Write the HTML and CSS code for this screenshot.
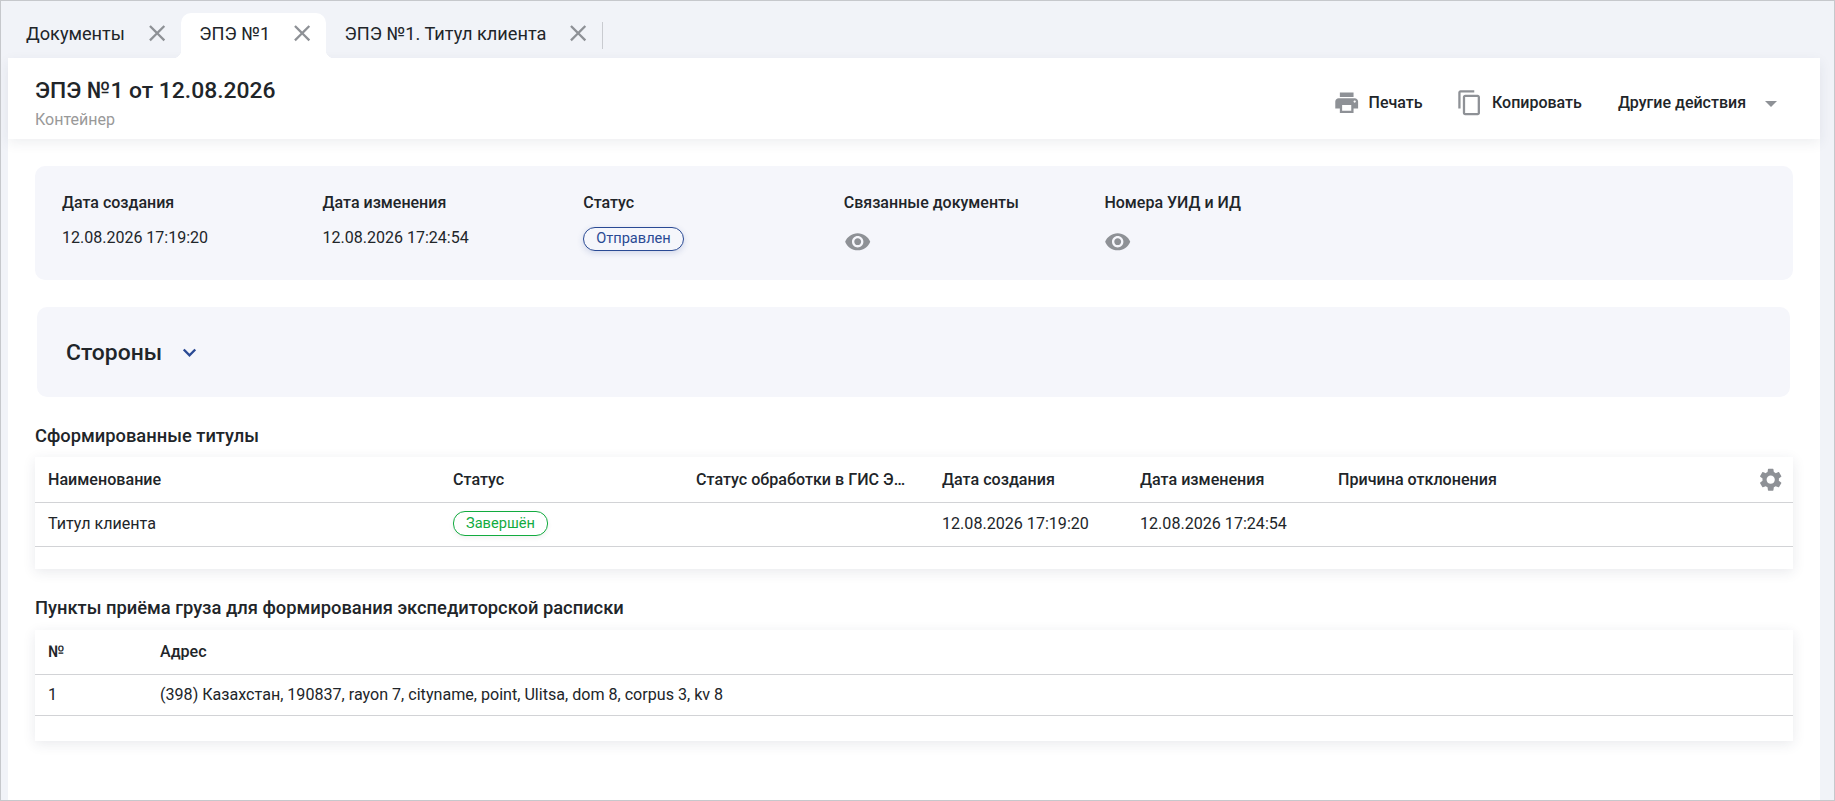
FILE: index.html
```html
<!DOCTYPE html>
<html>
<head>
  <title>ЭПЭ №1</title>
  <link rel="stylesheet" href="styles.css">
</head>
<body>
  <div class="tabs">
    <div class="tab">
      <span>Документы</span>
      <svg class="tab-close" viewBox="4 4 16 16"><path d="M19 6.41L17.59 5 12 10.59 6.41 5 5 6.41 10.59 12 5 17.59 6.41 19 12 13.41 17.59 19 19 17.59 13.41 12z"/></svg>
    </div>
    <div class="tab active">
      <span>ЭПЭ №1</span>
      <svg class="tab-close" viewBox="4 4 16 16"><path d="M19 6.41L17.59 5 12 10.59 6.41 5 5 6.41 10.59 12 5 17.59 6.41 19 12 13.41 17.59 19 19 17.59 13.41 12z"/></svg>
    </div>
    <div class="tab last">
      <span>ЭПЭ №1. Титул клиента</span>
      <svg class="tab-close" viewBox="4 4 16 16"><path d="M19 6.41L17.59 5 12 10.59 6.41 5 5 6.41 10.59 12 5 17.59 6.41 19 12 13.41 17.59 19 19 17.59 13.41 12z"/></svg>
    </div>
  </div>

  <div class="page">
    <div class="header">
      <div>
        <div class="title">ЭПЭ №1 от 12.08.2026</div>
        <div class="subtitle">Контейнер</div>
      </div>
      <div class="actions">
        <div class="action print">
          <svg class="icon" viewBox="0 0 24 24"><path d="M19 8H5c-1.66 0-3 1.34-3 3v6h4v4h12v-4h4v-6c0-1.66-1.34-3-3-3zm-3 11H8v-5h8v5zm3-7c-.55 0-1-.45-1-1s.45-1 1-1 1 .45 1 1-.45 1-1 1zm-1-9H6v4h12V3z"/></svg>
          Печать
        </div>
        <div class="action copy">
          <svg class="icon" viewBox="0 0 24 24"><path d="M16 1H4c-1.1 0-2 .9-2 2v14h2V3h12V1zm3 4H8c-1.1 0-2 .9-2 2v14c0 1.1.9 2 2 2h11c1.1 0 2-.9 2-2V7c0-1.1-.9-2-2-2zm0 16H8V7h11v14z"/></svg>
          Копировать
        </div>
        <div class="action more">
          Другие действия
          <span class="caret"></span>
        </div>
      </div>
    </div>

    <div class="main">
      <div class="info">
        <div class="info-col">
          <div class="info-label">Дата создания</div>
          <div class="info-value">12.08.2026 17:19:20</div>
        </div>
        <div class="info-col">
          <div class="info-label">Дата изменения</div>
          <div class="info-value">12.08.2026 17:24:54</div>
        </div>
        <div class="info-col">
          <div class="info-label">Статус</div>
          <span class="chip blue">Отправлен</span>
        </div>
        <div class="info-col">
          <div class="info-label">Связанные документы</div>
          <svg class="icon eye" viewBox="0 0 24 24"><path d="M12 4.5C7 4.5 2.73 7.61 1 12c1.73 4.39 6 7.5 11 7.5s9.27-3.11 11-7.5c-1.73-4.39-6-7.5-11-7.5zM12 17c-2.76 0-5-2.24-5-5s2.24-5 5-5 5 2.24 5 5-2.24 5-5 5zm0-8c-1.66 0-3 1.34-3 3s1.34 3 3 3 3-1.34 3-3-1.34-3-3-3z"/></svg>
        </div>
        <div class="info-col">
          <div class="info-label">Номера УИД и ИД</div>
          <svg class="icon eye" viewBox="0 0 24 24"><path d="M12 4.5C7 4.5 2.73 7.61 1 12c1.73 4.39 6 7.5 11 7.5s9.27-3.11 11-7.5c-1.73-4.39-6-7.5-11-7.5zM12 17c-2.76 0-5-2.24-5-5s2.24-5 5-5 5 2.24 5 5-2.24 5-5 5zm0-8c-1.66 0-3 1.34-3 3s1.34 3 3 3 3-1.34 3-3-1.34-3-3-3z"/></svg>
        </div>
      </div>

      <div class="parties">
        <span>Стороны</span>
        <svg class="chevron" viewBox="0 0 12 8"><path d="M1.4 1.2L6 5.8l4.6-4.6" fill="none" stroke="#2a4a94" stroke-width="1.9"/></svg>
      </div>

      <div class="section-title first">Сформированные титулы</div>
      <div class="table-box titles">
        <table>
          <colgroup>
            <col class="c-name"><col class="c-status"><col class="c-gis"><col class="c-date"><col class="c-date"><col>
          </colgroup>
          <thead>
            <tr>
              <th>Наименование</th>
              <th>Статус</th>
              <th><div class="cut">Статус обработки в ГИС ЭПД</div></th>
              <th>Дата создания</th>
              <th>Дата изменения</th>
              <th>Причина отклонения</th>
            </tr>
          </thead>
          <tbody>
            <tr>
              <td>Титул клиента</td>
              <td><span class="chip green">Завершён</span></td>
              <td></td>
              <td>12.08.2026 17:19:20</td>
              <td>12.08.2026 17:24:54</td>
              <td></td>
            </tr>
          </tbody>
        </table>
        <svg class="icon gear" viewBox="0 0 24 24"><path d="M19.14 12.94c.04-.3.06-.61.06-.94 0-.32-.02-.64-.07-.94l2.03-1.58c.18-.14.23-.41.12-.61l-1.92-3.32c-.12-.22-.37-.29-.59-.22l-2.39.96c-.5-.38-1.03-.7-1.62-.94l-.36-2.54c-.04-.24-.24-.41-.48-.41h-3.84c-.24 0-.43.17-.47.41l-.36 2.54c-.59.24-1.13.57-1.62.94l-2.39-.96c-.22-.08-.47 0-.59.22L2.74 8.87c-.12.21-.08.47.12.61l2.03 1.58c-.05.3-.09.63-.09.94s.02.64.07.94l-2.03 1.58c-.18.14-.23.41-.12.61l1.92 3.32c.12.22.37.29.59.22l2.39-.96c.5.38 1.03.7 1.62.94l.36 2.54c.05.24.24.41.48.41h3.84c.24 0 .44-.17.47-.41l.36-2.54c.59-.24 1.13-.56 1.62-.94l2.39.96c.22.08.47 0 .59-.22l1.92-3.32c.12-.22.07-.47-.12-.61l-2.01-1.58zM12 15.6c-1.98 0-3.6-1.62-3.6-3.6s1.62-3.6 3.6-3.6 3.6 1.62 3.6 3.6-1.62 3.6-3.6 3.6z"/></svg>
      </div>

      <div class="section-title second">Пункты приёма груза для формирования экспедиторской расписки</div>
      <div class="table-box points">
        <table>
          <colgroup>
            <col class="c-num"><col>
          </colgroup>
          <thead>
            <tr>
              <th>№</th>
              <th>Адрес</th>
            </tr>
          </thead>
          <tbody>
            <tr>
              <td>1</td>
              <td>(398) Казахстан, 190837, rayon 7, cityname, point, Ulitsa, dom 8, corpus 3, kv 8</td>
            </tr>
          </tbody>
        </table>
      </div>
    </div>
  </div>
</body>
</html>
```

FILE: styles.css
```css
* {
  box-sizing: border-box;
}

html, body {
  height: 100%;
}

body {
  margin: 0;
  border: 1px solid #c6c8cc;
  background-color: #f1f3f8;
  font-family: Roboto, sans-serif;
  font-size: 16px;
  color: #212529;
  overflow: hidden;
}

.icon {
  width: 27.4px;
  height: 27.4px;
  fill: #8e9196;
  flex: none;
}

/* tabs */
.tabs {
  display: flex;
  height: 57px;
  padding: 12px 0 0 7px;
}

.tab {
  position: relative;
  display: flex;
  align-items: center;
  height: 45px;
  padding: 0 15px 5px 18px;
  font-size: 18.2px;
}

.tab.active {
  background-color: #fff;
  border-radius: 10px 10px 0 0;
  padding-left: 18px;
  padding-right: 14px;
}

.tab.active::before,
.tab.active::after {
  content: "";
  position: absolute;
  bottom: 0;
  width: 8px;
  height: 8px;
}

.tab.active::before {
  left: -8px;
  background: radial-gradient(circle at 0 0, transparent 8px, #fff 8.5px);
}

.tab.active::after {
  right: -8px;
  background: radial-gradient(circle at 100% 0, transparent 8px, #fff 8.5px);
}

.tab.last {
  padding-left: 19px;
}

.tab.last::after {
  content: "";
  position: absolute;
  right: 0;
  top: 9px;
  height: 27px;
  width: 1px;
  background-color: #c9cbd0;
}

.tab-close {
  width: 18.3px;
  height: 18.3px;
  margin-left: 23px;
  fill: #8e9196;
}

/* page */
.page {
  margin: 0 14px 0 7px;
  background-color: #fff;
  height: 742px;
}

.header {
  display: flex;
  justify-content: space-between;
  align-items: center;
  height: 81px;
  padding: 0 27px;
  box-shadow: 0 4px 12px rgba(40, 50, 80, 0.08);
}

.title {
  font-size: 22.86px;
  font-weight: 500;
  line-height: 26px;
  margin-top: 11px;
}

.subtitle {
  margin-top: 6px;
  line-height: 20px;
  color: #999;
}

.actions {
  display: flex;
  align-items: center;
  font-weight: 500;
  margin-top: 9px;
  margin-right: 16px;
}

.action {
  display: flex;
  align-items: center;
}

.print .icon {
  margin-right: 8px;
}

.copy {
  margin-left: 33px;
}

.copy .icon {
  margin-right: 9px;
}

.more {
  margin-left: 36px;
}

.caret {
  width: 0;
  height: 0;
  margin-left: 19px;
  margin-top: 2px;
  border-left: 6px solid transparent;
  border-right: 6px solid transparent;
  border-top: 6px solid #8e9196;
}

.main {
  padding: 27px 27px 0;
}

/* info panel */
.info {
  display: flex;
  height: 114px;
  padding: 27px 27px 0;
  background-color: #f5f6fb;
  border-radius: 10px;
}

.info-col {
  width: 260.6px;
}

.info-label {
  font-weight: 500;
  line-height: 20px;
  margin-bottom: 15px;
}

.info-value {
  line-height: 20px;
}

.chip {
  display: inline-block;
  height: 24px;
  line-height: 21px;
  padding: 0 12px;
  border-radius: 12px;
  border: 1px solid;
  font-size: 14.6px;
  background-color: #fff;
}

.chip.blue {
  margin-top: -1px;
  color: #2a4a94;
  border-color: #2a4a94;
  box-shadow: 0 2px 6px rgba(42, 74, 148, 0.18);
  background-color: #f5f6fb;
}

.chip.green {
  height: 25px;
  line-height: 22px;
  color: #12ab3f;
  border-color: #12ab3f;
  box-shadow: 0 2px 5px rgba(0, 0, 0, 0.06);
}

.eye {
  display: block;
}

/* parties */
.parties {
  display: flex;
  align-items: center;
  height: 90px;
  margin: 27px 3px 0 2px;
  padding-left: 29px;
  background-color: #f5f6fb;
  border-radius: 10px;
  font-size: 22.86px;
  font-weight: 500;
}

.chevron {
  width: 15px;
  height: 10px;
  margin-left: 20px;
  margin-top: 1px;
}

/* tables */
.section-title {
  font-size: 18.33px;
  font-weight: 500;
  line-height: 20px;
}

.section-title.first {
  margin-top: 29px;
  margin-bottom: 11px;
}

.section-title.second {
  margin-top: 29px;
  margin-bottom: 12px;
}

.table-box {
  position: relative;
  background-color: #fff;
  box-shadow: 0 3px 12px rgba(40, 50, 80, 0.1);
  font-size: 16.1px;
}

.titles {
  padding-bottom: 22px;
}

.points {
  padding-bottom: 25px;
}

table {
  width: 100%;
  table-layout: fixed;
  border-collapse: collapse;
}

th {
  height: 45px;
  padding: 0 13px;
  text-align: left;
  font-weight: 500;
  border-bottom: 1px solid #d2d3d6;
}

td {
  height: 44px;
  padding: 0 13px 2px;
  border-bottom: 1px solid #d2d3d6;
}

th + th,
td + td {
  padding-left: 0;
}

.points td {
  height: 41px;
}

.c-name {
  width: 418px;
}

.c-status {
  width: 243px;
}

.c-gis {
  width: 246px;
}

.c-date {
  width: 198px;
}

.c-num {
  width: 125px;
}

.cut {
  white-space: nowrap;
  overflow: hidden;
  text-overflow: ellipsis;
  margin-right: 20px;
}

.gear {
  position: absolute;
  right: 9px;
  top: 9px;
}
```
